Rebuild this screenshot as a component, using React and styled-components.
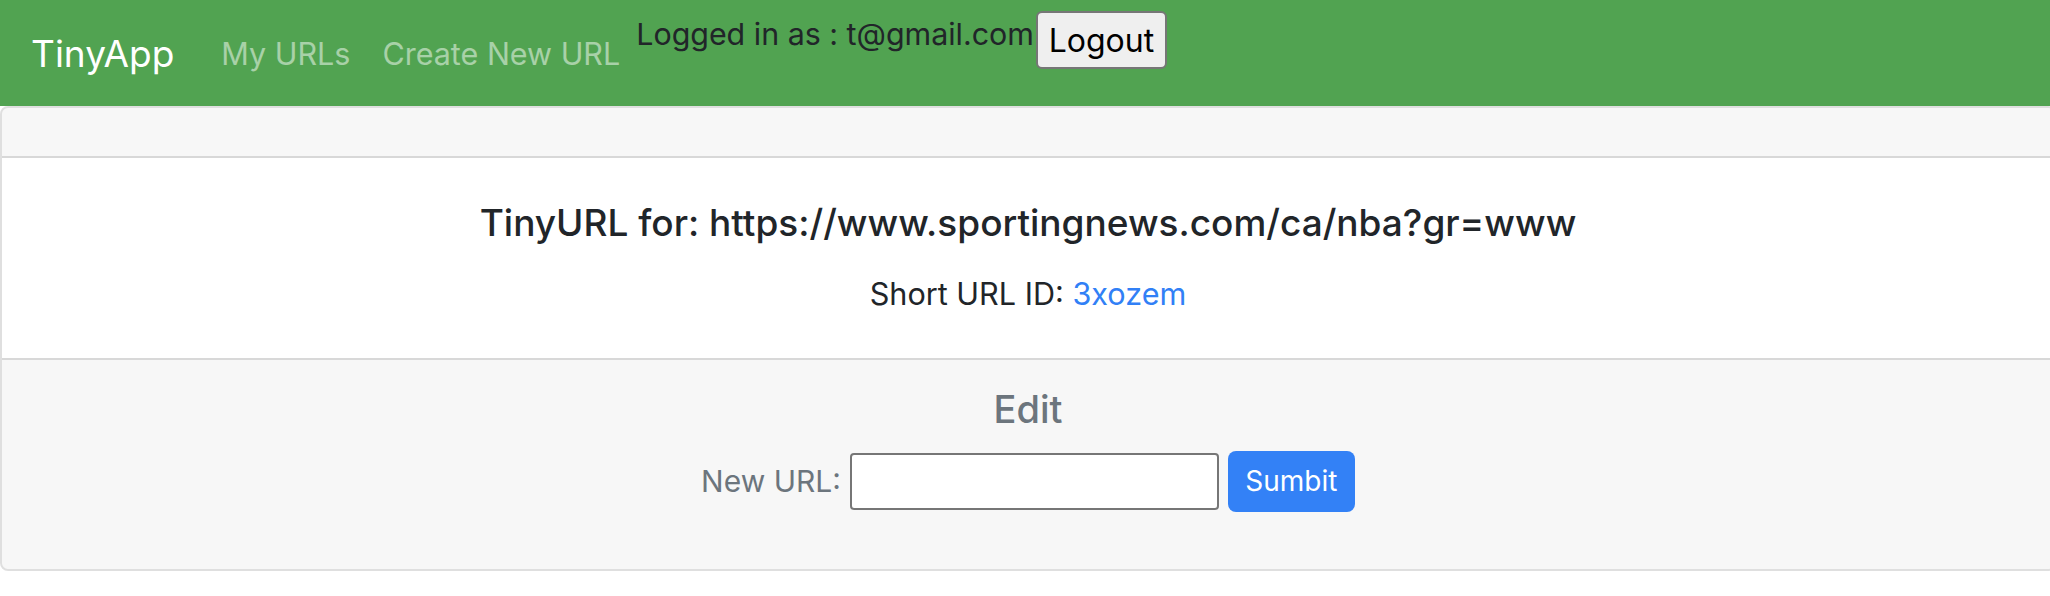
import React from "react";
import styled, { createGlobalStyle } from "styled-components";

const GlobalStyle = createGlobalStyle`
  html, body {
    margin: 0;
    padding: 0;
    overflow-x: hidden;
    background: #ffffff;
  }
  body {
    font-family: Inter, "Noto Sans", sans-serif;
    color: #212529;
  }
  * { box-sizing: border-box; }
`;

const Navbar = styled.nav`
  display: flex;
  align-items: center;
  height: 106px;
  padding-left: 31px;
  background: #51a351;
`;

const Brand = styled.a`
  font-size: 37px;
  line-height: 57px;
  color: #ffffff;
  margin-right: 31px;
  text-decoration: none;
`;

const NavLink = styled.a`
  font-size: 30.5px;
  line-height: 45px;
  padding: 0 16px;
  color: rgba(255, 255, 255, 0.5);
  text-decoration: none;
`;

const UserBox = styled.div`
  align-self: flex-start;
  margin-top: 11px;
  display: flex;
  align-items: flex-start;
`;

const UserText = styled.span`
  font-size: 30.4px;
  line-height: 46px;
  color: #212529;
`;

const LogoutButton = styled.button`
  margin-left: 2px;
  height: 58px;
  width: 131px;
  padding: 0;
  border: 2px solid #767676;
  border-radius: 6px;
  background: #efefef;
  color: #000000;
  font-family: Inter, "Noto Sans", sans-serif;
  font-size: 32px;
`;

const Card = styled.section`
  width: calc(100% + 6px);
  border: 2px solid rgba(0, 0, 0, 0.125);
  border-radius: 8px;
  overflow: hidden;
`;

const CardHeader = styled.div`
  height: 50px;
  background: rgba(0, 0, 0, 0.03);
  border-bottom: 2px solid rgba(0, 0, 0, 0.125);
`;

const CardBody = styled.div`
  height: 200px;
  padding-top: 41px;
  text-align: center;
`;

const Title = styled.h5`
  margin: 0 0 23px;
  font-size: 37px;
  line-height: 48px;
  font-weight: 500;
  color: #212529;
`;

const Text = styled.p`
  margin: 0;
  font-size: 30.6px;
  line-height: 48px;
`;

const Link = styled.a`
  color: #3180f6;
  text-decoration: none;
`;

const CardFooter = styled.div`
  height: 211px;
  padding-top: 25px;
  background: rgba(0, 0, 0, 0.03);
  border-top: 2px solid rgba(0, 0, 0, 0.125);
  text-align: center;
  color: #6c757d;
`;

const FooterTitle = styled.h5`
  margin: 0 0 17px;
  font-size: 38px;
  line-height: 48px;
  font-weight: 500;
  color: #6c757d;
`;

const Form = styled.form`
  display: flex;
  justify-content: center;
  align-items: center;
  height: 62px;
`;

const Label = styled.label`
  font-size: 30px;
  color: #6c757d;
  margin-right: 9px;
`;

const Input = styled.input`
  width: 369px;
  height: 57px;
  border: 2px solid #767676;
  border-radius: 4px;
  background: #ffffff;
  margin-right: 9px;
`;

const SubmitButton = styled.button`
  width: 127px;
  height: 61px;
  border: none;
  border-radius: 8px;
  background: #3381f6;
  color: #ffffff;
  font-family: Inter, "Noto Sans", sans-serif;
  font-size: 28px;
`;

export default function App() {
  return (
    <>
      <GlobalStyle />
      <Navbar>
        <Brand>TinyApp</Brand>
        <NavLink>My URLs</NavLink>
        <NavLink>Create New URL</NavLink>
        <UserBox>
          <UserText>Logged in as : t@gmail.com</UserText>
          <LogoutButton>Logout</LogoutButton>
        </UserBox>
      </Navbar>
      <Card>
        <CardHeader />
        <CardBody>
          <Title>TinyURL for: https://www.sportingnews.com/ca/nba?gr=www</Title>
          <Text>
            Short URL ID: <Link>3xozem</Link>
          </Text>
        </CardBody>
        <CardFooter>
          <FooterTitle>Edit</FooterTitle>
          <Form onSubmit={(e) => e.preventDefault()}>
            <Label>New URL:</Label>
            <Input type="text" />
            <SubmitButton type="submit">Sumbit</SubmitButton>
          </Form>
        </CardFooter>
      </Card>
    </>
  );
}
